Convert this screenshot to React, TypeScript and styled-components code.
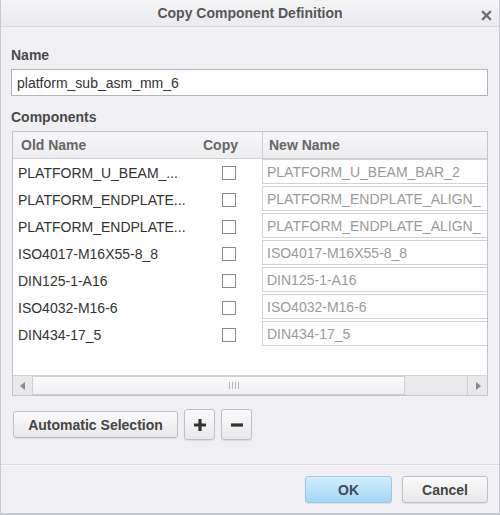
import React from 'react';
import styled, { createGlobalStyle } from 'styled-components';

const GlobalStyle = createGlobalStyle`
  body { margin: 0; padding: 0; background: #f0f0f4; font-family: "Liberation Sans", Arial, sans-serif; }
`;

const Dialog = styled.div`
  width: 500px;
  height: 515px;
  box-sizing: border-box;
  background: #f0f0f4;
  border-left: 1px solid #c8c8d0;
  border-right: 1px solid #c8c8d0;
  border-bottom: 2px solid #c8c8d0;
  display: flex;
  flex-direction: column;
  overflow: hidden;
`;

const TitleBar = styled.div`
  height: 26px;
  flex: none;
  display: flex;
  align-items: center;
  justify-content: center;
  position: relative;
  background: linear-gradient(#f4f4f7, #ebebef);
  border-bottom: 1px solid #d6d6dc;
  font-weight: bold;
  font-size: 14px;
  color: #575757;
`;

const CloseBox = styled.div`
  position: absolute;
  right: 7px;
  top: 8px;
  width: 11px;
  height: 11px;
`;

const Body = styled.div`
  padding: 0 11px 0 10px;
  display: flex;
  flex-direction: column;
`;

const Label = styled.div<{ $top: number }>`
  margin-top: ${p => p.$top}px;
  font-weight: bold;
  font-size: 14px;
  color: #4a4a4a;
  height: 16px;
  line-height: 16px;
`;

const NameInput = styled.div`
  margin-top: 6px;
  height: 27px;
  box-sizing: border-box;
  border: 1px solid #b4b4b8;
  background: #fff;
  padding-left: 5px;
  display: flex;
  align-items: center;
  font-size: 14px;
  color: #333;
`;

const Table = styled.div`
  margin-top: 6px;
  margin-left: 1px;
  height: 265px;
  box-sizing: border-box;
  border: 1px solid #c4c4c8;
  background: #fff;
  display: flex;
  flex-direction: column;
`;

const Grid = styled.div`
  display: grid;
  grid-template-columns: 184px 65px 1fr;
  flex: 1;
  align-content: start;
`;

const HeadCell = styled.div<{ $pad: number; $sep?: boolean }>`
  height: 26px;
  display: flex;
  align-items: center;
  padding-left: ${p => p.$pad}px;
  background: linear-gradient(#f7f7f9, #ededf0);
  border-bottom: 1px solid #d0d0d4;
  border-left: ${p => (p.$sep ? '1px solid #d0d0d4' : 'none')};
  font-weight: bold;
  font-size: 14px;
  color: #666;
`;

const OldCell = styled.div`
  height: 27px;
  display: flex;
  align-items: center;
  padding-left: 5px;
  font-size: 14px;
  color: #333;
  white-space: nowrap;
`;

const CopyCell = styled.div`
  height: 27px;
  display: flex;
  align-items: center;
  padding-left: 25px;
`;

const Check = styled.div`
  width: 14px;
  height: 14px;
  box-sizing: border-box;
  border: 1px solid #8a8a8a;
  background: #fff;
`;

const NewCell = styled.div`
  height: 27px;
  padding-bottom: 2px;
  box-sizing: border-box;
`;

const NewBox = styled.div`
  height: 25px;
  box-sizing: border-box;
  border: 1px solid #d2d2d6;
  border-right: none;
  display: flex;
  align-items: center;
  padding-left: 4px;
  font-size: 14px;
  color: #9a9a9a;
  white-space: nowrap;
  overflow: hidden;
`;

const ScrollBar = styled.div`
  height: 19px;
  flex: none;
  display: flex;
  background: #e9e9ec;
  border-top: 1px solid #d4d4d8;
`;

const ScrollBtn = styled.div<{ $side: 'left' | 'right' }>`
  width: 19px;
  display: flex;
  align-items: center;
  justify-content: center;
  border-${p => (p.$side === 'left' ? 'right' : 'left')}: 1px solid #d0d0d4;
`;

const Thumb = styled.div`
  width: 372px;
  box-sizing: border-box;
  background: linear-gradient(#fbfbfc, #f0f0f2);
  border: 1px solid #d0d0d4;
  border-left: none;
  display: flex;
  align-items: center;
  justify-content: center;
  padding-left: 30px;
`;

const Grip = styled.div`
  display: flex;
  gap: 2px;
  & > span { width: 1px; height: 7px; background: #b4b4b8; }
`;

const Track = styled.div`
  flex: 1;
`;

const ToolRow = styled.div`
  display: flex;
  align-items: center;
  gap: 6px;
  margin-top: 13px;
  padding-left: 2px;
`;

const Button = styled.div<{ $w: number; $h: number; $primary?: boolean }>`
  width: ${p => p.$w}px;
  height: ${p => p.$h}px;
  box-sizing: border-box;
  display: flex;
  align-items: center;
  justify-content: center;
  border: 1px solid ${p => (p.$primary ? '#9cc8e4' : '#c0c0c4')};
  border-radius: 3px;
  background: ${p =>
    p.$primary ? 'linear-gradient(#d3edfd, #a3d6f7)' : 'linear-gradient(#fbfbfc, #e8e8ea)'};
  font-weight: bold;
  font-size: 14px;
  color: ${p => (p.$primary ? '#3e4c5a' : '#444')};
  box-shadow: 0 1px 1px rgba(0, 0, 0, 0.08);
`;

const Separator = styled.div`
  margin-top: 24px;
  height: 1px;
  background: #dcdce0;
  border-bottom: 1px solid #fafafc;
`;

const Footer = styled.div`
  display: flex;
  justify-content: flex-end;
  gap: 10px;
  padding: 10px 11px 0 0;
`;

const rows: [string, string][] = [
  ['PLATFORM_U_BEAM_...', 'PLATFORM_U_BEAM_BAR_2'],
  ['PLATFORM_ENDPLATE...', 'PLATFORM_ENDPLATE_ALIGN_'],
  ['PLATFORM_ENDPLATE...', 'PLATFORM_ENDPLATE_ALIGN_'],
  ['ISO4017-M16X55-8_8', 'ISO4017-M16X55-8_8'],
  ['DIN125-1-A16', 'DIN125-1-A16'],
  ['ISO4032-M16-6', 'ISO4032-M16-6'],
  ['DIN434-17_5', 'DIN434-17_5'],
];

function App() {
  return (
    <>
      <GlobalStyle />
      <Dialog>
        <TitleBar>
          Copy Component Definition
          <CloseBox>
            <svg width="11" height="11" viewBox="0 0 11 11">
              <path d="M2 2 L9 9 M9 2 L2 9" stroke="#707070" strokeWidth="2.4" strokeLinecap="square" />
            </svg>
          </CloseBox>
        </TitleBar>
        <Body>
          <Label $top={20}>Name</Label>
          <NameInput>platform_sub_asm_mm_6</NameInput>
          <Label $top={13}>Components</Label>
          <Table>
            <Grid>
              <HeadCell $pad={8}>Old Name</HeadCell>
              <HeadCell $pad={6}>Copy</HeadCell>
              <HeadCell $pad={6} $sep>New Name</HeadCell>
              {rows.map(([oldName, newName], i) => (
                <React.Fragment key={i}>
                  <OldCell>{oldName}</OldCell>
                  <CopyCell>
                    <Check />
                  </CopyCell>
                  <NewCell>
                    <NewBox>{newName}</NewBox>
                  </NewCell>
                </React.Fragment>
              ))}
            </Grid>
            <ScrollBar>
              <ScrollBtn $side="left">
                <svg width="6" height="8" viewBox="0 0 6 8">
                  <path d="M5 0 L0 4 L5 8 Z" fill="#8a8a8e" />
                </svg>
              </ScrollBtn>
              <Thumb>
                <Grip>
                  <span />
                  <span />
                  <span />
                  <span />
                </Grip>
              </Thumb>
              <Track />
              <ScrollBtn $side="right">
                <svg width="6" height="8" viewBox="0 0 6 8">
                  <path d="M1 0 L6 4 L1 8 Z" fill="#8a8a8e" />
                </svg>
              </ScrollBtn>
            </ScrollBar>
          </Table>
          <ToolRow>
            <Button $w={165} $h={27}>Automatic Selection</Button>
            <Button $w={31} $h={31}>
              <svg width="14" height="14" viewBox="0 0 14 14">
                <path d="M7 1 V13 M1 7 H13" stroke="#333" strokeWidth="3.2" />
              </svg>
            </Button>
            <Button $w={31} $h={31}>
              <svg width="14" height="14" viewBox="0 0 14 14">
                <path d="M1 7 H13" stroke="#333" strokeWidth="3.2" />
              </svg>
            </Button>
          </ToolRow>
        </Body>
        <Separator />
        <Footer>
          <Button $w={87} $h={27} $primary>OK</Button>
          <Button $w={86} $h={27}>Cancel</Button>
        </Footer>
      </Dialog>
    </>
  );
}

export default App;
